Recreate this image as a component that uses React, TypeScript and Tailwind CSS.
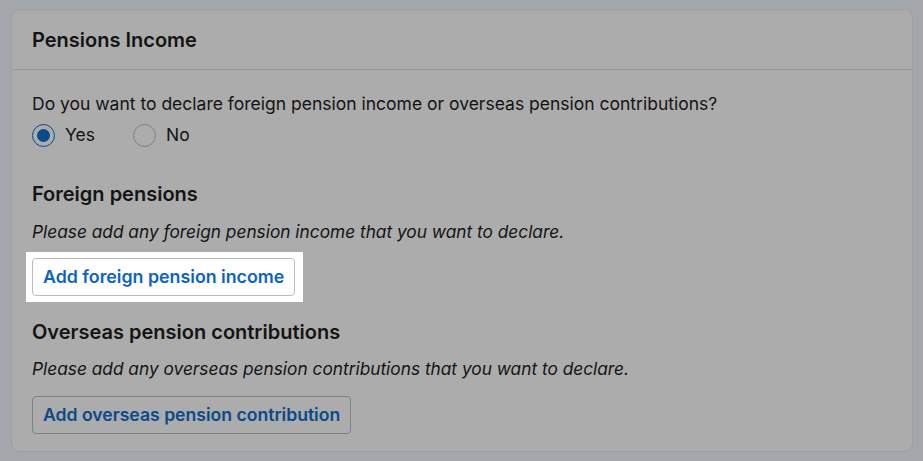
import React from "react";

export default function App() {
  return (
    <div className="min-h-[461px] w-full bg-[#a3a6ab] pt-[9px] pl-[11px] pr-[10px] pb-[9px]" style={{ fontFamily: "Inter, 'Noto Sans', sans-serif" }}>
      <div className="rounded-[9px] border border-[#9c9fa3] bg-[#acacac] h-[443px] flex flex-col">
        <div className="h-[60px] flex items-center px-[20px] border-b border-[#9a9a9a] shrink-0">
          <h1 className="text-[20px] font-semibold text-[#141414]">Pensions Income</h1>
        </div>
        <div className="px-[20px] pt-[22px] flex flex-col text-[#141414]">
          <p className="text-[17.5px] leading-[24px]">Do you want to declare foreign pension income or overseas pension contributions?</p>
          <div className="flex items-center mt-[7px] h-[24px]">
            <label className="flex items-center gap-[10px]">
              <span className="w-[23px] h-[23px] rounded-full border-[1.5px] border-[#0a4a8a] flex items-center justify-center">
                <span className="w-[13px] h-[13px] rounded-full bg-[#0a4a8a]" />
              </span>
              <span className="text-[17.5px]">Yes</span>
            </label>
            <label className="flex items-center gap-[10px] ml-[38px]">
              <span className="w-[23px] h-[23px] rounded-full border-[1.5px] border-[#7f7f7f]" />
              <span className="text-[17.5px]">No</span>
            </label>
          </div>
          <h2 className="text-[20px] font-semibold mt-[34px] leading-[26px]">Foreign pensions</h2>
          <p className="text-[17.3px] italic mt-[13px] leading-[24px]">Please add any foreign pension income that you want to declare.</p>
          <div className="mt-[8px] -ml-[6px] self-start bg-white p-[6px] pr-[8px]">
            <button className="h-[38px] px-[10px] rounded-[4px] border border-[#b8bcc2] bg-white text-[17.8px] font-semibold text-[#0b64c0]">Add foreign pension income</button>
          </div>
          <h2 className="text-[20px] font-semibold mt-[17px] leading-[26px]">Overseas pension contributions</h2>
          <p className="text-[17.3px] italic mt-[12px] leading-[24px]">Please add any overseas pension contributions that you want to declare.</p>
          <button className="mt-[15px] self-start h-[38px] px-[10px] rounded-[4px] border border-[#7e8185] text-[17.6px] font-semibold text-[#0a4a8a]">Add overseas pension contribution</button>
        </div>
      </div>
    </div>
  );
}
